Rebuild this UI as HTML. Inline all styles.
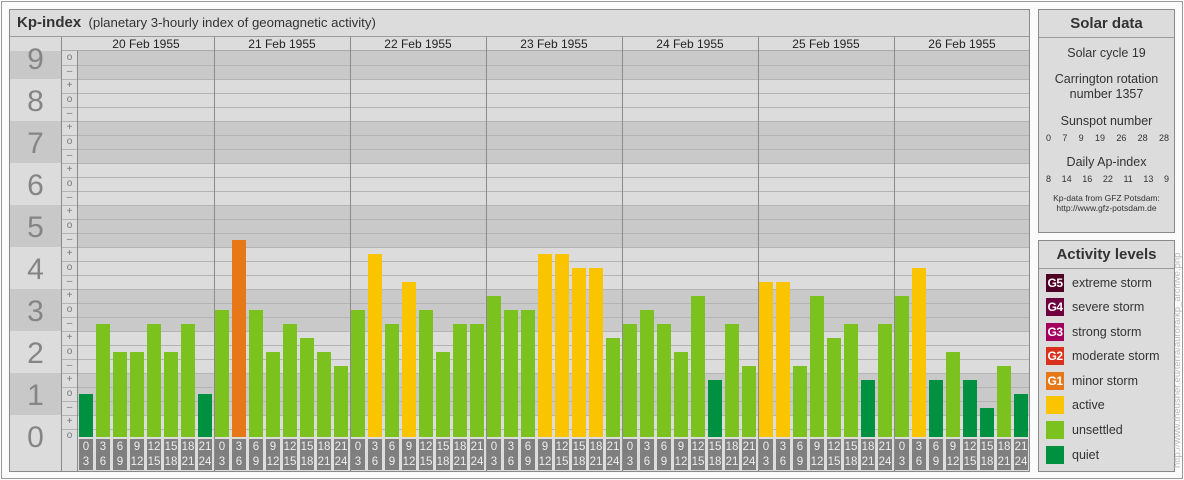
<!DOCTYPE html>
<html><head><meta charset="utf-8"><style>
*{margin:0;padding:0;box-sizing:border-box}
body{width:1184px;height:480px;background:#fbfbfb;font-family:"Liberation Sans",sans-serif;position:relative;overflow:hidden}
.a{position:absolute}
#frame{left:1px;top:1px;width:1182px;height:478px;border:1px solid #999}
.panel{background:#dcdcdc;border:1px solid #8a8a8a}
.c{text-align:center}
</style></head><body>
<div class="a" id="frame"></div>
<div class="a panel" style="left:9px;top:9px;width:1021px;height:463px"></div>
<div class="a" style="left:10px;top:10px;width:1019px;height:27px;border-bottom:1px solid #9a9a9a;font-size:13.2px;color:#333;line-height:26px;padding-left:7px"><b style="font-size:15px">Kp-index</b>&nbsp;&nbsp;(planetary 3-hourly index of geomagnetic activity)</div>
<div id="chart"></div>
<div class="a panel" style="left:1038px;top:9px;width:137px;height:224px;color:#333">
 <div style="height:28px;border-bottom:1px solid #9a9a9a;font-weight:bold;font-size:15px;line-height:28px" class="c">Solar data</div>
 <div class="c" style="font-size:12.5px;margin-top:8px">Solar cycle 19</div>
 <div class="c" style="font-size:12.5px;margin-top:12px;line-height:15px">Carrington rotation<br>number 1357</div>
 <div class="c" style="font-size:12.5px;margin-top:12px">Sunspot number</div>
 <div style="font-size:9px;display:flex;justify-content:space-between;padding:0 5px 0 7px;margin-top:5px"><span>0</span><span>7</span><span>9</span><span>19</span><span>26</span><span>28</span><span>28</span></div>
 <div class="c" style="font-size:12.5px;margin-top:12px">Daily Ap-index</div>
 <div style="font-size:9px;display:flex;justify-content:space-between;padding:0 5px 0 7px;margin-top:5px"><span>8</span><span>14</span><span>16</span><span>22</span><span>11</span><span>13</span><span>9</span></div>
 <div class="c" style="font-size:8.5px;margin-top:9px;line-height:10px">Kp-data from GFZ Potsdam:<br>http://www.gfz-potsdam.de</div>
</div>
<div class="a panel" style="left:1038px;top:240px;width:137px;height:232px;color:#333">
 <div style="height:28px;border-bottom:1px solid #9a9a9a;font-weight:bold;font-size:15px;line-height:28px" class="c">Activity levels</div>
</div>
<div id="leg"></div>
<div class="a" style="left:1172px;top:468px;transform-origin:0 0;transform:rotate(-90deg);font-size:9.5px;color:#bbb;white-space:nowrap;width:230px">http://www.theusner.eu/terra/aurora/kp_archive.php</div>
<script>
var h='';
function Y(v){return 436-42*v;}
for(var n=0;n<=9;n++){
 var t=Math.max(51,Y(n+0.5)),b=Math.min(437,Y(n-0.5));
 var dark=(n%2==1);
 h+='<div class="a" style="left:10px;top:'+t+'px;width:51px;height:'+(b-t)+'px;background:'+(dark?'#c8c8c8':'#dcdcdc')+'"></div>';
 h+='<div class="a" style="left:78px;top:'+t+'px;width:951px;height:'+(b-t)+'px;background:'+(dark?'#c9c9c9':'#dcdcdc')+'"></div>';
 h+='<div class="a c" style="left:10px;top:'+(Y(n)-18)+'px;width:51px;font-size:30px;line-height:40px;color:#858585">'+n+'</div>';
}
for(var y=429;y>51;y-=14){h+='<div class="a" style="left:62px;top:'+y+'px;width:967px;height:1px;background:#b4b4b4"></div>';}
for(var k=0;k<=27;k++){var v=k/3;var s=k%3==0?'o':(k%3==1?'+':'\u2013');
 h+='<div class="a c" style="left:61px;top:'+(Y(v)-7)+'px;width:17px;font-size:10px;line-height:14px;color:#777">'+s+'</div>';}
h+='<div class="a" style="left:61px;top:37px;width:1px;height:434px;background:#8a8a8a"></div>';
h+='<div class="a" style="left:77px;top:37px;width:1px;height:434px;background:#8a8a8a"></div>';
h+='<div class="a" style="left:62px;top:37px;width:967px;height:14px;background:#dcdcdc;border-bottom:1px solid #aaa"></div>';
var days=['20','21','22','23','24','25','26'];
var tops=[[394,324,352,352,324,352,324,394],[310,240,310,352,324,338,352,366],[310,254,324,282,310,352,324,324],[296,310,310,254,254,268,268,338],[324,310,324,352,296,380,324,366],[282,282,366,296,338,324,380,324],[296,268,380,352,380,408,366,394]];
var hrs=[[0,3],[3,6],[6,9],[9,12],[12,15],[15,18],[18,21],[21,24]];
for(var d=0;d<7;d++){var x0=78+d*136;
 if(d>0)h+='<div class="a" style="left:'+x0+'px;top:37px;width:1px;height:434px;background:#8a8a8a"></div>';
 h+='<div class="a c" style="left:'+x0+'px;top:37px;width:136px;font-size:12px;line-height:15px;color:#222">'+days[d]+' Feb 1955</div>';
 for(var i=0;i<8;i++){var t=tops[d][i];var c=t>=380?'#009140':(t<=250?'#e67817':(t<=282?'#fac400':'#7cc21f'));
  var x=x0+1+17*i;
  h+='<div class="a" style="left:'+x+'px;top:'+t+'px;width:14px;height:'+(437-t)+'px;background:'+c+'"></div>';
  h+='<div class="a c" style="left:'+x+'px;top:439px;width:14px;height:31px;background:#7f7f7f;color:#eee;font-size:11.5px;line-height:15px;padding-top:1px">'+hrs[i][0]+'<br>'+hrs[i][1]+'</div>';}
}
document.getElementById('chart').innerHTML=h;
var L=[['G5','extreme storm','#4f0025'],['G4','severe storm','#6e0040'],['G3','strong storm','#a3005e'],['G2','moderate storm','#d9311c'],['G1','minor storm','#e67817'],['','active','#fac400'],['','unsettled','#7cc21f'],['','quiet','#009140']];
var g='';var ys=[283,307,332,356,381,405,430,455];
for(var i=0;i<8;i++){g+='<div class="a c" style="left:1046px;top:'+(ys[i]-9)+'px;width:18px;height:18px;background:'+L[i][2]+';color:#fff;font-size:12px;font-weight:bold;line-height:18px;letter-spacing:-0.5px">'+L[i][0]+'</div>';
 g+='<div class="a" style="left:1072px;top:'+(ys[i]-8)+'px;font-size:12.5px;line-height:16px;color:#333">'+L[i][1]+'</div>';}
document.getElementById('leg').innerHTML=g;
</script>
</body></html>
